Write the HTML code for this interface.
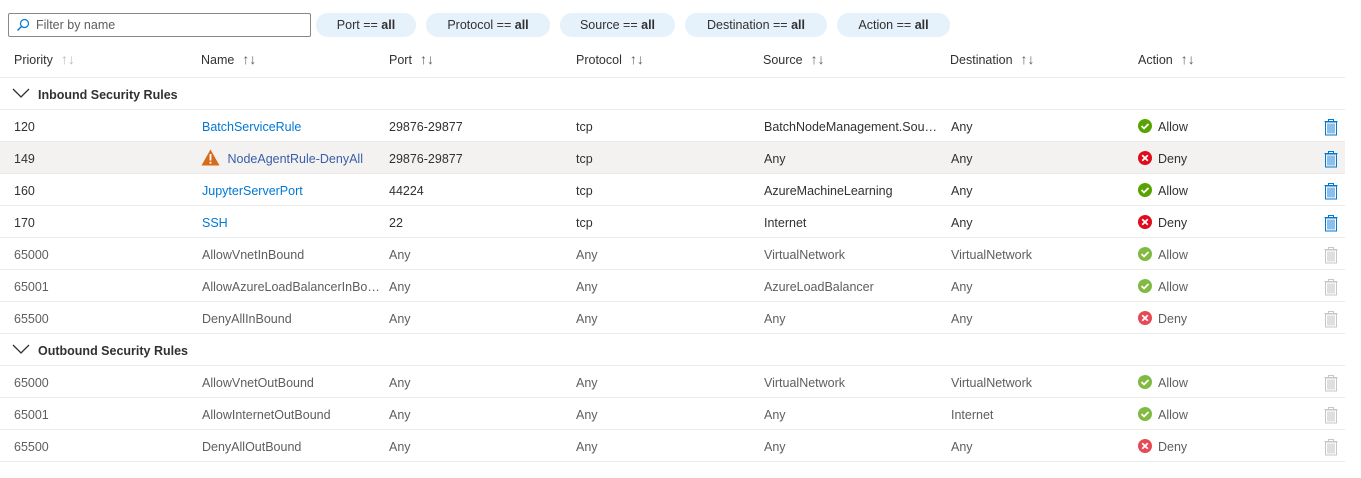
<!DOCTYPE html><html><head><style>
body{margin:0;width:1361px;height:478px;background:#fff;font-family:"Liberation Sans",sans-serif;font-size:12.5px;color:#323130;position:relative;overflow:hidden}
.a{position:absolute}
.search{left:8px;top:13px;width:301px;height:22px;border:1px solid #8a8886;border-radius:2px}
.search span{position:absolute;left:27px;top:4px;color:#605e5c}
.pill{top:13px;height:24px;line-height:24px;border-radius:12px;background:#e5f1fb;text-align:center;color:#323130}
.hdr{top:42px;height:35px;width:1345px;left:0;border-bottom:1px solid #edebe9}
.hdr div,.row div{position:absolute;top:0}
.hdr div{line-height:35px;color:#323130}
.row{position:absolute;left:0;width:1345px;height:31px;border-bottom:1px solid #edebe9;line-height:35px}
.g{color:#605e5c}
.lk{color:#0078d4}
.grp div{font-weight:bold;color:#323130}
.ic{display:inline-block;width:14px;height:14px;border-radius:50%;vertical-align:-2px;margin-right:6px;position:relative}
.ok{background:#57a300}.no{background:#e00b1c}
.ar{color:#605e5c;font-size:14px;margin-left:8px}
</style></head><body>
<div class="a search"><svg class="a" style="left:7px;top:4px" width="14" height="14" viewBox="0 0 14 14"><circle cx="8.5" cy="5.5" r="4" fill="none" stroke="#0078d4" stroke-width="1.2"/><line x1="5.5" y1="8.5" x2="1.5" y2="12.5" stroke="#0078d4" stroke-width="1.3"/></svg><span>Filter by name</span></div>
<div class="a pill" style="left:316px;width:100px">Port == <b>all</b></div>
<div class="a pill" style="left:426px;width:124px">Protocol == <b>all</b></div>
<div class="a pill" style="left:560px;width:115px">Source == <b>all</b></div>
<div class="a pill" style="left:685px;width:142px">Destination == <b>all</b></div>
<div class="a pill" style="left:837px;width:113px">Action == <b>all</b></div>
<div class="a hdr">
<div style="left:14px">Priority<span class="ar" style="color:#bbb">↑↓</span></div>
<div style="left:201px">Name<span class="ar">↑↓</span></div>
<div style="left:389px">Port<span class="ar">↑↓</span></div>
<div style="left:576px">Protocol<span class="ar">↑↓</span></div>
<div style="left:763px">Source<span class="ar">↑↓</span></div>
<div style="left:950px">Destination<span class="ar">↑↓</span></div>
<div style="left:1138px">Action<span class="ar">↑↓</span></div>
</div>
<div class="row grp" style="top:78px"><div style="left:12px"><svg width="18" height="12" viewBox="0 0 18 12" style="vertical-align:0"><path d="M1 2 L9 10 L17 2" fill="none" stroke="#323130" stroke-width="1.3"/></svg></div><div style="left:38px">Inbound Security Rules</div></div>
<div class="row grp" style="top:334px"><div style="left:12px"><svg width="18" height="12" viewBox="0 0 18 12"><path d="M1 2 L9 10 L17 2" fill="none" stroke="#323130" stroke-width="1.3"/></svg></div><div style="left:38px">Outbound Security Rules</div></div>

<div class="row" style="top:110px"><div style="left:14px">120</div><div style="left:202px" class="lk">BatchServiceRule</div><div style="left:389px">29876-29877</div><div style="left:576px">tcp</div><div style="left:764px">BatchNodeManagement.Sou…</div><div style="left:951px">Any</div><div style="left:1138px"><span class="ic ok"></span>Allow</div></div>
<div class="row" style="top:142px;background:#f3f2f1"><div style="left:14px">149</div><div style="left:201px"><svg width="19" height="17" viewBox="0 0 19 17" style="vertical-align:-3px"><path d="M9.5 0.5 L18.5 16.5 L0.5 16.5Z" fill="#d86a1c"/><rect x="8.6" y="5" width="1.8" height="6.5" fill="#fff"/><rect x="8.6" y="12.8" width="1.8" height="1.8" fill="#fff"/></svg> <span style="color:#3a5ea8;margin-left:4px">NodeAgentRule-DenyAll</span></div><div style="left:389px">29876-29877</div><div style="left:576px">tcp</div><div style="left:764px">Any</div><div style="left:951px">Any</div><div style="left:1138px"><span class="ic no"></span>Deny</div></div>
<div class="row" style="top:174px"><div style="left:14px">160</div><div style="left:202px" class="lk">JupyterServerPort</div><div style="left:389px">44224</div><div style="left:576px">tcp</div><div style="left:764px">AzureMachineLearning</div><div style="left:951px">Any</div><div style="left:1138px"><span class="ic ok"></span>Allow</div></div>
<div class="row" style="top:206px"><div style="left:14px">170</div><div style="left:202px" class="lk">SSH</div><div style="left:389px">22</div><div style="left:576px">tcp</div><div style="left:764px">Internet</div><div style="left:951px">Any</div><div style="left:1138px"><span class="ic no"></span>Deny</div></div>
<div class="row g" style="top:238px"><div style="left:14px">65000</div><div style="left:202px">AllowVnetInBound</div><div style="left:389px">Any</div><div style="left:576px">Any</div><div style="left:764px">VirtualNetwork</div><div style="left:951px">VirtualNetwork</div><div style="left:1138px"><span class="ic ok" style="opacity:.75"></span>Allow</div></div>
<div class="row g" style="top:270px"><div style="left:14px">65001</div><div style="left:202px">AllowAzureLoadBalancerInBo…</div><div style="left:389px">Any</div><div style="left:576px">Any</div><div style="left:764px">AzureLoadBalancer</div><div style="left:951px">Any</div><div style="left:1138px"><span class="ic ok" style="opacity:.75"></span>Allow</div></div>
<div class="row g" style="top:302px"><div style="left:14px">65500</div><div style="left:202px">DenyAllInBound</div><div style="left:389px">Any</div><div style="left:576px">Any</div><div style="left:764px">Any</div><div style="left:951px">Any</div><div style="left:1138px"><span class="ic no" style="opacity:.75"></span>Deny</div></div>
<div class="row g" style="top:366px"><div style="left:14px">65000</div><div style="left:202px">AllowVnetOutBound</div><div style="left:389px">Any</div><div style="left:576px">Any</div><div style="left:764px">VirtualNetwork</div><div style="left:951px">VirtualNetwork</div><div style="left:1138px"><span class="ic ok" style="opacity:.75"></span>Allow</div></div>
<div class="row g" style="top:398px"><div style="left:14px">65001</div><div style="left:202px">AllowInternetOutBound</div><div style="left:389px">Any</div><div style="left:576px">Any</div><div style="left:764px">Any</div><div style="left:951px">Internet</div><div style="left:1138px"><span class="ic ok" style="opacity:.75"></span>Allow</div></div>
<div class="row g" style="top:430px"><div style="left:14px">65500</div><div style="left:202px">DenyAllOutBound</div><div style="left:389px">Any</div><div style="left:576px">Any</div><div style="left:764px">Any</div><div style="left:951px">Any</div><div style="left:1138px"><span class="ic no" style="opacity:.75"></span>Deny</div></div>

<svg class="a" style="left:0;top:0" width="1361" height="478">
<defs>
<g id="ok"><path d="M-3.5 0 L-1 2.5 L3.5 -2" fill="none" stroke="#fff" stroke-width="1.8"/></g>
<g id="no"><path d="M-2.8 -2.8 L2.8 2.8 M2.8 -2.8 L-2.8 2.8" stroke="#fff" stroke-width="1.8"/></g>
<g id="tb"><rect x="-5.5" y="-5" width="11" height="13" fill="none" stroke-width="1"/><rect x="-4" y="-3.5" width="8" height="10" stroke="none"/><path d="M-6.5 -5.5 H6.5 M-2.5 -5.5 V-7.5 H2.5 V-5.5" fill="none" stroke-width="1"/></g>
</defs>
<g>
<use href="#ok" x="1145" y="126"/><use href="#no" x="1145" y="158"/><use href="#ok" x="1145" y="190"/><use href="#no" x="1145" y="222"/>
<use href="#ok" x="1145" y="254"/><use href="#ok" x="1145" y="286"/><use href="#no" x="1145" y="318"/>
<use href="#ok" x="1145" y="382"/><use href="#ok" x="1145" y="414"/><use href="#no" x="1145" y="446"/>
</g>
<g stroke="#0078d4" fill="#8cc0ea">
<use href="#tb" x="1331" y="127"/><use href="#tb" x="1331" y="159"/><use href="#tb" x="1331" y="191"/><use href="#tb" x="1331" y="223"/>
</g>
<g stroke="#c8c6c4" fill="#e1dfdd">
<use href="#tb" x="1331" y="255"/><use href="#tb" x="1331" y="287"/><use href="#tb" x="1331" y="319"/>
<use href="#tb" x="1331" y="383"/><use href="#tb" x="1331" y="415"/><use href="#tb" x="1331" y="447"/>
</g>
</svg>
</body></html>
